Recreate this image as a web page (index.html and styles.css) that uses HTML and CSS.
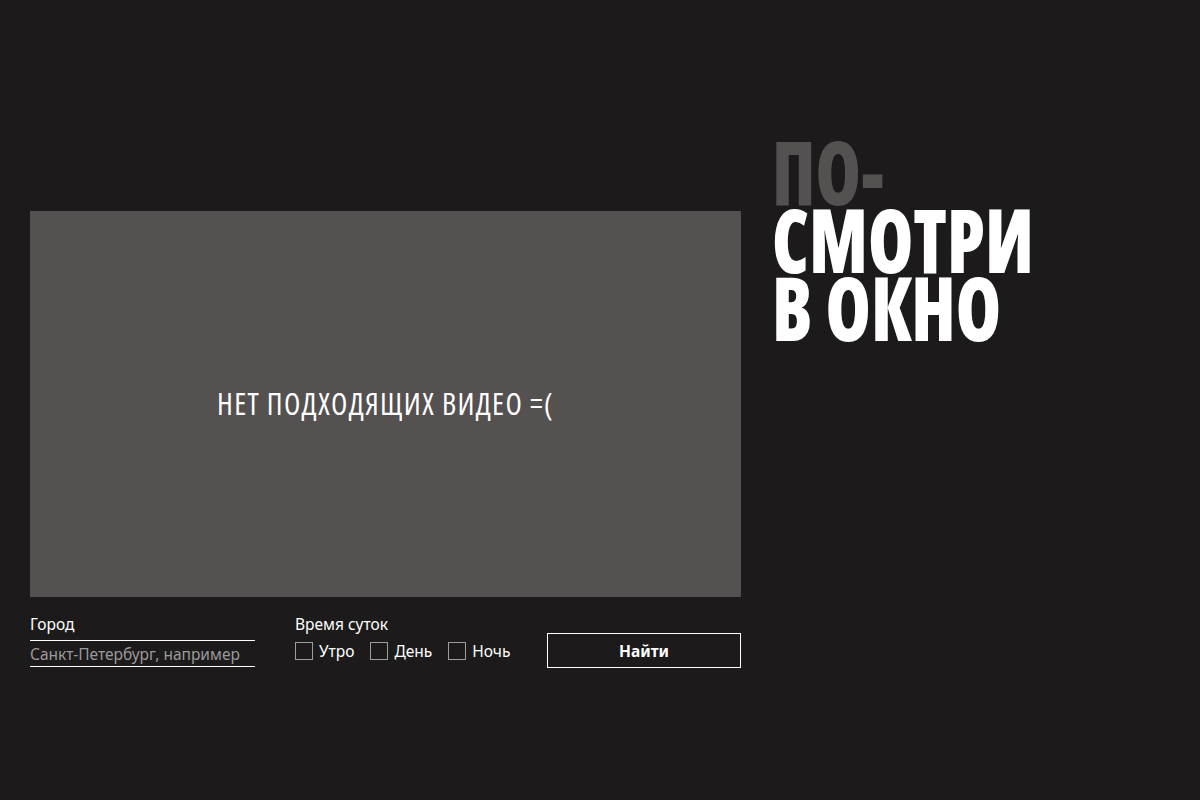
FILE: index.html
```html
<!DOCTYPE html>
<html lang="ru">
<head>
<meta charset="utf-8">
<title>По-смотри в окно</title>
<link rel="stylesheet" href="styles.css">
</head>
<body>
<div class="page">
  <div class="left">
    <div class="video"><p class="empty">НЕТ ПОДХОДЯЩИХ ВИДЕО =(</p></div>
    <form class="controls">
      <div class="field city">
        <label class="label">Город</label>
        <input class="input" type="text" placeholder="Санкт-Петербург, например">
      </div>
      <div class="field time">
        <span class="label">Время суток</span>
        <div class="checks">
          <label class="check"><span class="box"></span>Утро</label>
          <label class="check"><span class="box"></span>День</label>
          <label class="check"><span class="box"></span>Ночь</label>
        </div>
      </div>
      <button class="btn" type="button">Найти</button>
    </form>
  </div>
  <h1 class="title"><span class="dim">ПО-</span><br>СМОТРИ<br>В ОКНО</h1>
</div>
</body>
</html>
```
FILE: styles.css
```css
html, body { margin: 0; padding: 0; }
body {
  background: #1c1a1b;
  color: #fff;
  font-family: "Noto Sans", sans-serif;
  width: 1200px;
  height: 800px;
  overflow: hidden;
}
.page {
  display: flex;
  gap: 31px;
  padding: 0 30px;
}
.left {
  width: 711px;
  flex: none;
  padding-top: 211px;
}
.video {
  height: 386px;
  background: #545150;
  display: flex;
  align-items: center;
  justify-content: center;
}
.empty {
  margin: 0;
  font-family: "Open Sans", sans-serif;
  font-stretch: 75%;
  font-size: 30px;
  line-height: 40px;
  letter-spacing: 1.3px;
  color: #fff;
}
.controls {
  display: flex;
  align-items: flex-start;
  margin-top: 16px;
}
.field { display: flex; flex-direction: column; }
.label { font-size: 15.5px; line-height: 22px; }
.city { width: 225px; }
.input {
  margin-top: 5px;
  background: transparent;
  border: 0;
  border-top: 1px solid #fff;
  border-bottom: 1px solid #fff;
  color: #fff;
  font: 15.5px "Noto Sans", sans-serif;
  padding: 1px 0 0;
  height: 27px;
  box-sizing: border-box;
  outline: none;
}
.input::placeholder { color: #9c9999; }
.time { margin-left: 40px; }
.checks { display: flex; gap: 16px; margin-top: 7px; }
.check {
  display: flex;
  align-items: center;
  gap: 6px;
  font-size: 15.5px;
  line-height: 18px;
}
.box {
  width: 18px;
  height: 18px;
  box-sizing: border-box;
  border: 1px solid #a09d9d;
}
.btn {
  margin-left: auto;
  margin-top: 20px;
  width: 194px;
  height: 35px;
  background: transparent;
  border: 1px solid #fff;
  color: #fff;
  font: 700 15.5px "Noto Sans", sans-serif;
}
.title {
  margin: 0;
  padding-top: 137px;
  font-family: "Open Sans", sans-serif;
  font-stretch: 75%;
  font-weight: 800;
  font-size: 88px;
  line-height: 68px;
  color: #fff;
  transform: scaleX(0.83);
  transform-origin: left top;
  white-space: nowrap;
}
.dim { color: #545150; }
```
